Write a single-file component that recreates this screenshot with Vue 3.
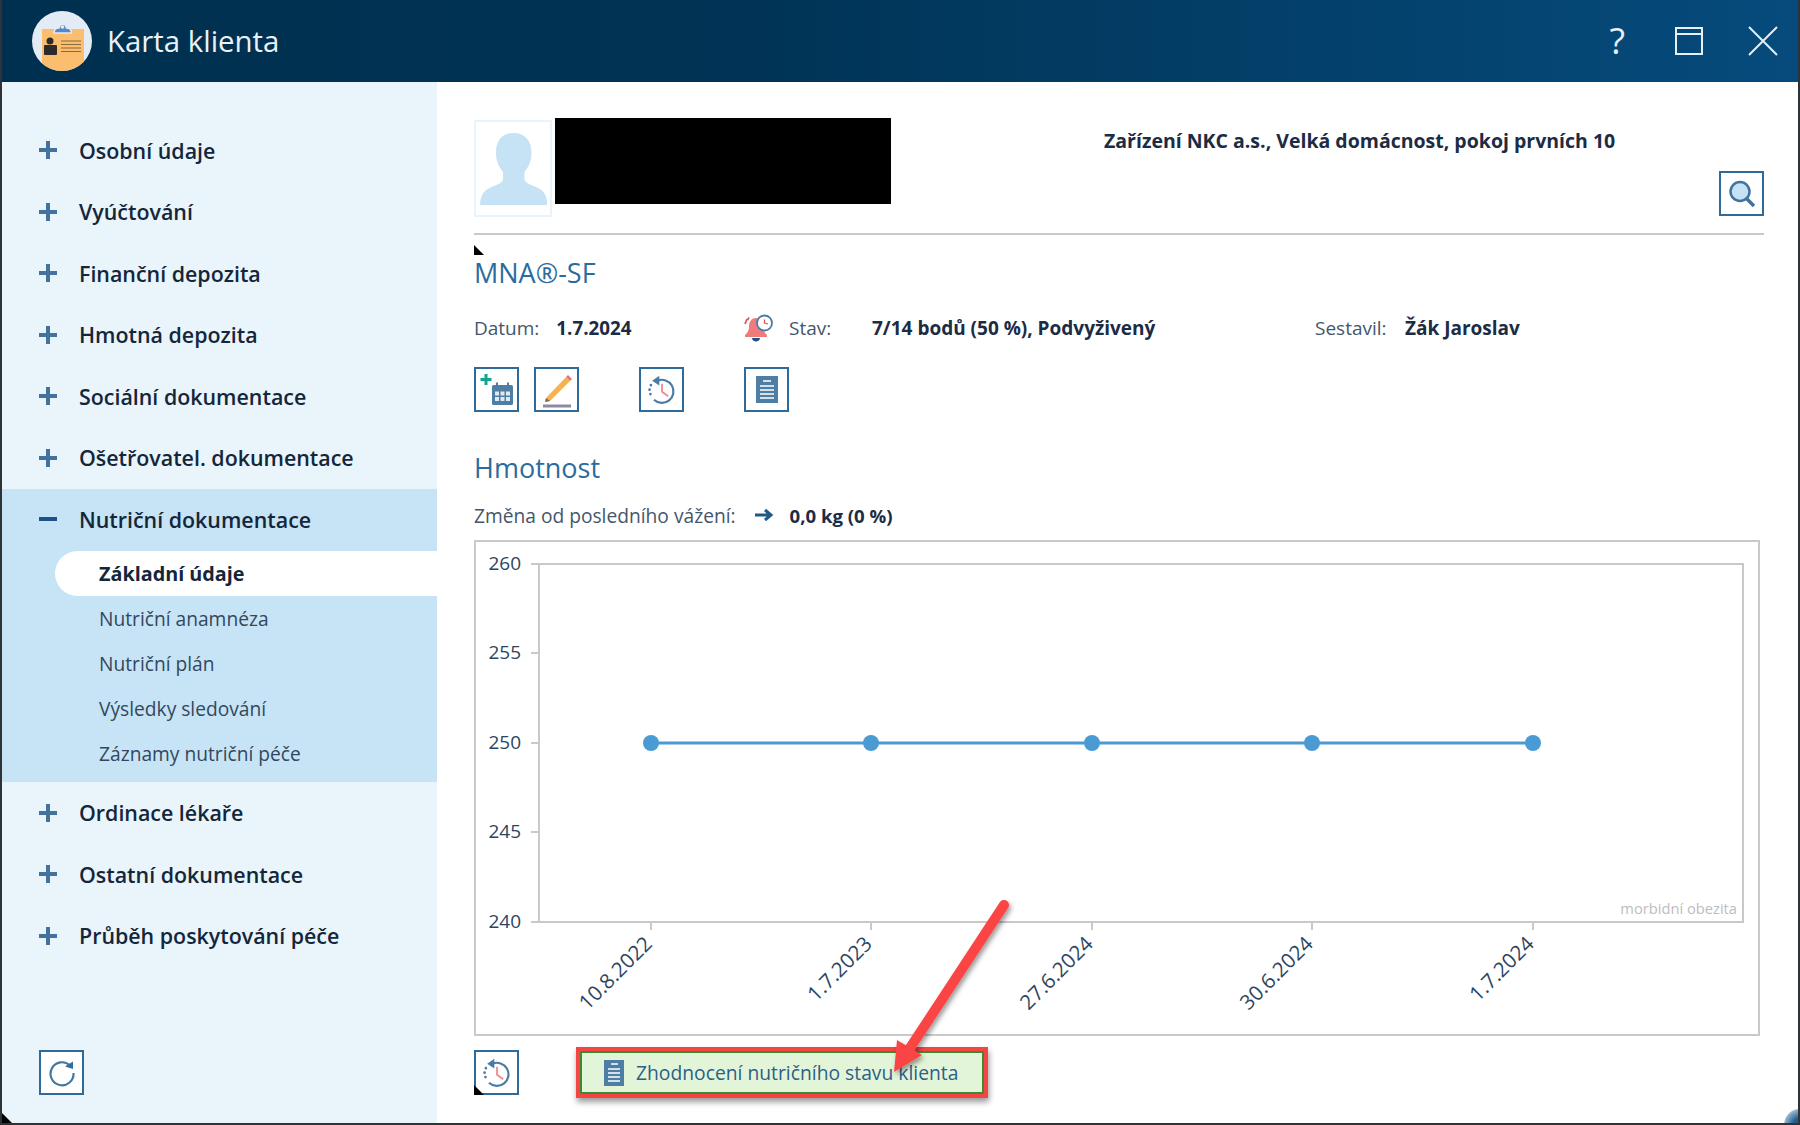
<script setup>
const navTop = ['Osobní údaje', 'Vyúčtování', 'Finanční depozita', 'Hmotná depozita', 'Sociální dokumentace', 'Ošetřovatel. dokumentace']
const navBottom = ['Ordinace lékaře', 'Ostatní dokumentace', 'Průběh poskytování péče']
const subItems = ['Nutriční anamnéza', 'Nutriční plán', 'Výsledky sledování', 'Záznamy nutriční péče']

// chart coordinates are relative to the chart box
const yTicks = [
  { label: '260', y: 24 },
  { label: '255', y: 113 },
  { label: '250', y: 203 },
  { label: '245', y: 292 },
  { label: '240', y: 382 },
]
const points = [
  { x: 176, label: '10.8.2022' },
  { x: 396, label: '1.7.2023' },
  { x: 617, label: '27.6.2024' },
  { x: 837, label: '30.6.2024' },
  { x: 1058, label: '1.7.2024' },
]
</script>

<template>
  <div class="window">
    <header class="titlebar">
      <svg class="logo" width="60" height="60" viewBox="0 0 60 60">
        <defs><clipPath id="lg"><circle cx="30" cy="30" r="30" /></clipPath></defs>
        <circle cx="30" cy="30" r="30" fill="#e3ecf4" />
        <rect x="10" y="18" width="42" height="50" fill="#fbbd6e" clip-path="url(#lg)" />
        <path d="M22 22c0-3 1.500-5 5-5 1-5 6.500-5 7.500 0 3.500 0 5 2 5 5z" fill="#5b86c4" stroke="#e3ecf4" stroke-width="1.500" />
        <circle cx="30.500" cy="16" r="1.800" fill="#e3ecf4" />
        <circle cx="18" cy="30" r="3.500" fill="#2c2b2b" />
        <rect x="12" y="34" width="13" height="10" rx="1" fill="#2c2b2b" />
        <path d="M29 30h20M29 33.500h20M29 37h20M29 40.500h20" stroke="#8a6a3f" stroke-width="1.200" />
      </svg>
      <span class="title">Karta klienta</span>
      <div class="win-btns">
        <span class="help">?</span>
        <svg width="28" height="28" viewBox="0 0 28 28" fill="none" stroke="#e6eff6" stroke-width="2">
          <rect x="1" y="1" width="26" height="26" /><path d="M1 7h26" />
        </svg>
        <svg width="30" height="30" viewBox="0 0 30 30" fill="none" stroke="#e6eff6" stroke-width="2">
          <path d="M1 1l28 28M29 1L1 29" />
        </svg>
      </div>
    </header>

    <div class="body">
      <aside class="sidebar">
        <nav class="nav">
          <div v-for="item in navTop" :key="item" class="nav-item">
            <svg class="sign" width="18" height="18" viewBox="0 0 18 18"><path d="M9 0v18M0 9h18" stroke="#44729f" stroke-width="4" /></svg>
            <span>{{ item }}</span>
          </div>
          <div class="nav-group">
            <div class="nav-item">
              <svg class="sign" width="18" height="18" viewBox="0 0 18 18"><path d="M0 9h18" stroke="#1d5288" stroke-width="4" /></svg>
              <span>Nutriční dokumentace</span>
            </div>
            <div class="sub sub-active">Základní údaje</div>
            <div v-for="item in subItems" :key="item" class="sub">{{ item }}</div>
          </div>
          <div v-for="item in navBottom" :key="item" class="nav-item">
            <svg class="sign" width="18" height="18" viewBox="0 0 18 18"><path d="M9 0v18M0 9h18" stroke="#44729f" stroke-width="4" /></svg>
            <span>{{ item }}</span>
          </div>
        </nav>
        <button class="icon-btn refresh">
          <svg width="28" height="28" viewBox="0 0 28 28" fill="none">
            <path d="M22 6.500A11.500 11.500 0 1 0 25.500 14" stroke="#44799f" stroke-width="2.200" />
            <path d="M17 7.500L25 2.500L25 10z" fill="#2f6f9f" />
          </svg>
        </button>
        <i class="corner corner-side"></i>
      </aside>

      <main class="main">
        <section class="client">
          <div class="avatar">
            <svg width="67" height="72" viewBox="0 0 67 72">
              <path d="M33.500 0c12 0 18 8 18 20 0 8-3 14-7 19v7c0 3 4 5 9 7 7 3 13 5 14 19H0c1-14 7-16 14-19 5-2 9-4 9-7v-7c-4-5-7-11-7-19C16 8 21.500 0 33.500 0z" fill="#c5e3f5" />
            </svg>
          </div>
          <div class="redacted"></div>
          <div class="facility">Zařízení NKC a.s., Velká domácnost, pokoj prvních 10</div>
          <button class="icon-btn search">
            <svg width="30" height="30" viewBox="0 0 30 30" fill="none">
              <circle cx="13" cy="12.500" r="9.500" fill="#c5e3f5" stroke="#44729f" stroke-width="2.500" />
              <path d="M20 20l7 7" stroke="#44729f" stroke-width="3.500" />
            </svg>
          </button>
        </section>

        <div class="mna-head">
          <i class="corner"></i>
          <h2>MNA®-SF</h2>
        </div>

        <div class="info-row">
          <div class="info info-date"><span class="lbl">Datum:</span><b>1.7.2024</b></div>
          <div class="info info-state">
            <svg class="bell" width="30" height="28" viewBox="0 0 30 28">
              <path d="M12 4c5 0 7 4 7 9 0 4 2 6 4 8v2H1v-2c2-2 4-4 4-8 0-5 2-9 7-9z" fill="#ef7b7b" />
              <path d="M8 24h8c0 2-2 3.500-4 3.500S8 26 8 24z" fill="#1d5288" />
              <path d="M3 5L1 10M5 3.500L3.500 6" stroke="#e25555" stroke-width="1.800" />
              <circle cx="20.500" cy="9" r="7.500" fill="#fff" stroke="#4a7ba6" stroke-width="1.800" />
              <path d="M20.500 5.500V9l3.500 1" stroke="#e25555" stroke-width="1.300" fill="none" />
            </svg>
            <span class="lbl lbl-state">Stav:</span><b>7/14 bodů (50 %), Podvyživený</b>
          </div>
          <div class="info info-author"><span class="lbl lbl-author">Sestavil:</span><b>Žák Jaroslav</b></div>
        </div>

        <div class="actions">
          <button class="icon-btn">
            <svg width="36" height="36" viewBox="0 0 36 36" fill="none">
              <path d="M7 2v11M1.500 7.500h11" stroke="#10a58f" stroke-width="3" />
              <rect x="13" y="13" width="21" height="20" rx="1.500" fill="#4f7ea5" />
              <path d="M18 10.500v4M29 10.500v4" stroke="#4f7ea5" stroke-width="2" />
              <g fill="#dfe9f1"><rect x="16" y="19.500" width="4" height="4" /><rect x="21.500" y="19.500" width="4" height="4" /><rect x="27" y="19.500" width="4" height="4" /><rect x="16" y="25" width="4" height="4" /><rect x="21.500" y="25" width="4" height="4" /><rect x="27" y="25" width="4" height="4" /></g>
            </svg>
          </button>
          <button class="icon-btn">
            <svg width="36" height="36" viewBox="0 0 36 36" fill="none">
              <path d="M7 26L27 5l4 4L11 29l-5 1z" fill="#f6b24f" />
              <path d="M27 5l2-2 4 4-2 2z" fill="#e57474" />
              <path d="M6 30l1-4 4 3z" fill="#7d6a55" />
              <path d="M4 34h28" stroke="#8d8aa0" stroke-width="3" />
            </svg>
          </button>
          <button class="icon-btn gap-a">
            <svg width="32" height="32" viewBox="0 0 36 36" fill="none">
              <path d="M13 7.500A13 13 0 1 1 9 29" stroke="#4a7ba6" stroke-width="2.400" />
              <path d="M5 22.500v.1M4 17.500v.1M5.500 12.500v.1" stroke="#4a7ba6" stroke-width="3" stroke-linecap="round" />
              <path d="M7 7.500L15 2v11z" fill="#4a7ba6" />
              <path d="M18 11v9l7 5" stroke="#ef8a8a" stroke-width="2" />
            </svg>
          </button>
          <button class="icon-btn gap-b">
            <svg width="26" height="30" viewBox="0 0 26 30">
              <rect x="2" y="1" width="22" height="27" fill="#4f7ea5" />
              <path d="M9 6h8M6 11h14M6 15h14M6 19h14M6 23h14" stroke="#fff" stroke-width="1.600" />
            </svg>
          </button>
        </div>

        <h2 class="weight-title">Hmotnost</h2>
        <div class="change">
          <span class="lbl">Změna od posledního vážení:</span>
          <svg width="20" height="16" viewBox="0 0 20 16" fill="none"><path d="M1 8h15M11 3l6 5-6 5" stroke="#1d5a86" stroke-width="3" /></svg>
          <b>0,0 kg (0 %)</b>
        </div>

        <div class="chart">
          <svg width="1284" height="494" viewBox="0 0 1284 494">
            <rect x="64" y="23" width="1204" height="358" fill="none" stroke="#c9c9c9" stroke-width="2" />
            <g v-for="t in yTicks" :key="t.label">
              <path :d="`M56 ${t.y - 1}h8`" stroke="#c9c9c9" stroke-width="2" />
              <text class="axis" x="46" :y="t.y + 5" text-anchor="end">{{ t.label }}</text>
            </g>
            <g v-for="p in points" :key="p.label">
              <path :d="`M${p.x} 381v8`" stroke="#c9c9c9" stroke-width="2" />
              <text class="axis axis-x" :x="p.x - 2" y="406" text-anchor="end" :transform="`rotate(-45 ${p.x - 2} 400)`">{{ p.label }}</text>
            </g>
            <path d="M176 202H1058" stroke="#4a9ad4" stroke-width="3" />
            <circle v-for="p in points" :key="p.x" :cx="p.x" cy="202" r="8" fill="#4a9ad4" />
            <text class="zone" x="1262" y="373" text-anchor="end">morbidní obezita</text>
          </svg>
        </div>

        <div class="bottom">
          <button class="icon-btn">
            <svg width="32" height="32" viewBox="0 0 36 36" fill="none">
              <path d="M13 7.500A13 13 0 1 1 9 29" stroke="#4a7ba6" stroke-width="2.400" />
              <path d="M5 22.500v.1M4 17.500v.1M5.500 12.500v.1" stroke="#4a7ba6" stroke-width="3" stroke-linecap="round" />
              <path d="M7 7.500L15 2v11z" fill="#4a7ba6" />
              <path d="M18 11v9l7 5" stroke="#ef8a8a" stroke-width="2" />
            </svg>
            <i class="corner corner-btn"></i>
          </button>
          <div class="callout">
            <div class="green-btn">
              <svg width="20" height="26" viewBox="0 0 20 26">
                <rect width="20" height="26" fill="#4f7ea5" />
                <path d="M7 4h7M4 9h12M4 13h12M4 17h12M4 21h12" stroke="#fff" stroke-width="1.500" />
              </svg>
              <span>Zhodnocení nutričního stavu klienta</span>
            </div>
          </div>
        </div>
      </main>
    </div>

    <!-- annotation arrow drawn over the screenshot -->
    <svg class="arrow" width="140" height="190" viewBox="0 0 140 190">
      <defs>
        <filter id="sh" x="-20%" y="-20%" width="140%" height="140%">
          <feDropShadow dx="2" dy="3" stdDeviation="2.500" flood-color="#000" flood-opacity=".4" />
        </filter>
      </defs>
      <g filter="url(#sh)">
        <path d="M124 7L30 150" stroke="#fb4444" stroke-width="10" stroke-linecap="round" />
        <path d="M14 174L17 142L42 157z" fill="#fb4444" />
      </g>
    </svg>
    <i class="blob"></i>
  </div>
</template>

<style>
html, body { margin: 0; background: #fff; }
</style>

<style scoped>
.window {
  position: relative;
  width: 1800px;
  height: 1125px;
  box-sizing: border-box;
  border: solid #2e3338;
  border-width: 0 2px 2px 2px;
  display: flex;
  flex-direction: column;
  font-family: "Open Sans", "Noto Sans", sans-serif;
  color: #1f3148;
  overflow: hidden;
  background: #fff;
}
.titlebar {
  height: 82px;
  flex: none;
  margin: 0 -2px;
  display: flex;
  align-items: center;
  padding: 0 22px 0 32px;
  background: linear-gradient(90deg, #00304f 0%, #003355 40%, #064b7c 100%);
  color: #eaf2f8;
}
.logo { margin-top: -1px; }
.title { font-size: 29.400px; margin: -1px 0 0 15px; }
.win-btns { margin-left: auto; display: flex; align-items: center; }
.help { font-size: 36px; line-height: 40px; color: #e6eff6; margin-right: 50px; }
.win-btns svg:first-of-type { margin-right: 45px; }
.body { flex: 1; display: flex; min-height: 0; }

.sidebar {
  position: relative;
  width: 435px;
  flex: none;
  background: #e9f4fb;
  display: flex;
  flex-direction: column;
}
.nav { padding-top: 37.500px; }
.nav-item {
  height: 61.500px;
  display: flex;
  align-items: center;
  font-size: 21.400px;
  font-weight: 600;
  color: #14263a;
}
.sign { margin: 0 22px 0 37px; flex: none; }
.nav-group { background: #c6e4f5; padding-bottom: 7px; }
.sub {
  position: relative;
  top: 1px;
  height: 45px;
  line-height: 45px;
  margin-left: 53px;
  padding-left: 44px;
  font-size: 19.200px;
  color: #33475e;
}
.sub-active {
  background: #fff;
  border-radius: 23px 0 0 23px;
  font-size: 19.800px;
  font-weight: 700;
  color: #14263a;
}
.refresh { position: absolute; left: 37px; top: 968px; background: #fff; }
.corner {
  position: absolute;
  width: 0;
  height: 0;
  border-style: solid;
  border-width: 10px 0 0 10px;
  border-color: transparent transparent transparent #000;
}
.corner-side { left: 0; bottom: 0; }

.icon-btn {
  box-sizing: border-box;
  width: 45px;
  height: 45px;
  padding: 0;
  position: relative;
  display: flex;
  align-items: center;
  justify-content: center;
  background: #fff;
  border: 2px solid #2e6a9a;
  flex: none;
}
.refresh.icon-btn { position: absolute; }

.main { flex: 1; min-width: 0; padding: 36px 34px 0 37px; }
.client {
  position: relative;
  height: 115px;
  border-bottom: 2px solid #c9c9c9;
  display: flex;
  align-items: flex-start;
}
.avatar {
  box-sizing: border-box;
  width: 78px;
  height: 97px;
  margin-top: 2px;
  border: 2px solid #e8f4fb;
  display: flex;
  align-items: flex-end;
  justify-content: center;
  padding-bottom: 10px;
}
.redacted { width: 336px; height: 86px; margin-left: 3px; background: #000; }
.facility {
  position: absolute;
  left: 630px;
  top: 9px;
  font-size: 19.500px;
  font-weight: 700;
  color: #1b2c44;
  white-space: nowrap;
}
.search { position: absolute; right: 0; top: 53px; }

.mna-head { position: relative; height: 60px; padding-top: 14px; box-sizing: border-box; }
.mna-head .corner { left: 0; top: 10px; }
h2 { margin: 0; font-weight: 400; font-size: 27px; color: #2b6c9e; line-height: 36px; }
.mna-head h2 { padding-top: 6px; }
.info-row { display: flex; align-items: center; height: 36px; margin-top: 15px; font-size: 19px; }
.info { display: flex; align-items: center; white-space: nowrap; }
.lbl { color: #44566b; }
b { font-weight: 700; color: #1b2c44; }
.info-date { width: 270px; }
.info-date b { margin-left: 17px; font-size: 18.800px; }
.bell { margin-right: 15px; }
.info-state { width: 571px; }
.lbl-state { width: 83px; }
.lbl-author { width: 90px; }
.actions { display: flex; margin-top: 21px; gap: 15px; }
.gap-a { margin-left: 45px; }
.gap-b { margin-left: 45px; }
.weight-title { margin-top: 38px; }
.change { display: flex; align-items: center; margin-top: 11px; height: 36px; font-size: 19.200px; }
.change b { font-size: 18.600px; }
.change svg { margin: 0 16px 0 18px; }
.chart {
  margin-top: 7px;
  width: 1286px;
  height: 496px;
  box-sizing: border-box;
  border: 2px solid #c9c9c9;
}
.chart svg { display: block; margin: -1px; }
.axis { font-family: "Open Sans", sans-serif; font-size: 19px; fill: #2c4560; }
.axis-x { font-size: 20.500px; }
.zone { font-family: "Open Sans", sans-serif; font-size: 14.700px; fill: #bdbdbd; }
.bottom { display: flex; align-items: flex-start; margin-top: 14px; }
.corner-btn { left: -2px; bottom: -2px; }
.callout {
  margin-left: 57px;
  margin-top: -3px;
  border: 4px solid #f44444;
  box-shadow: 1px 4px 6px rgba(0, 0, 0, .4);
}
.green-btn {
  box-sizing: border-box;
  width: 404px;
  height: 43px;
  display: flex;
  align-items: center;
  gap: 12px;
  padding-left: 22px;
  background: #e3f5d8;
  border: 2px solid #3d8a2e;
  font-size: 19.300px;
  color: #2b6088;
  white-space: nowrap;
}
.arrow { position: absolute; left: 878px; top: 898px; }
.blob {
  position: absolute;
  right: -2px;
  bottom: -2px;
  width: 16px;
  height: 16px;
  border-radius: 16px 0 0 0;
  background: radial-gradient(circle at 100% 100%, #1e5f92 0%, #1e5f92 30%, #fff 100%);
}
</style>
